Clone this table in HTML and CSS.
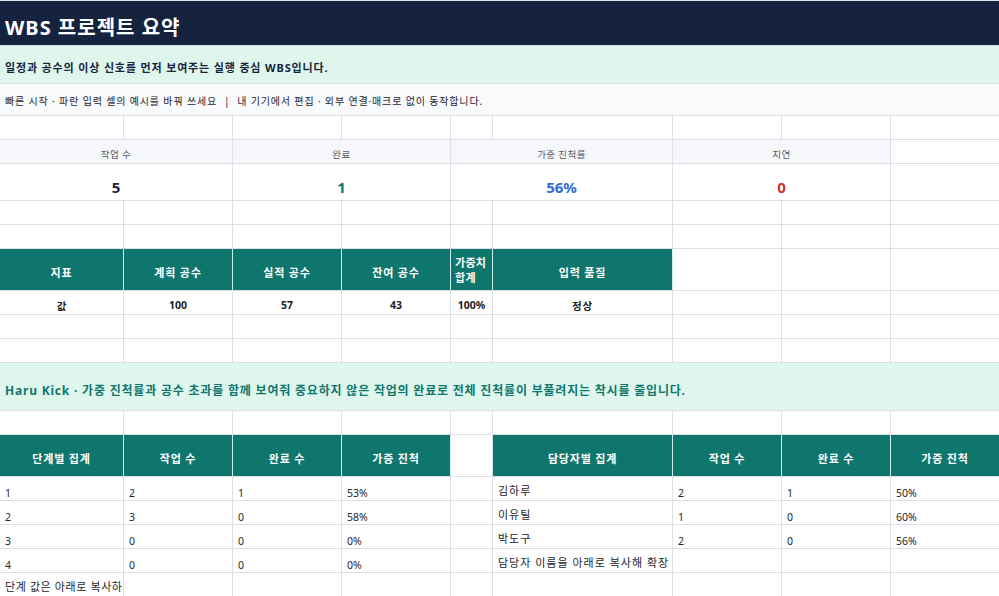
FILE: index.html
```html
<!DOCTYPE html>
<html lang="ko">
<head>
<meta charset="utf-8">
<title>WBS 프로젝트 요약</title>
<link rel="stylesheet" href="styles.css">
</head>
<body>
<div class="sheet">
  <div class="c full title">WBS 프로젝트 요약</div>
  <div class="c full intro">일정과 공수의 이상 신호를 먼저 보여주는 실행 중심 WBS입니다.</div>
  <div class="c full quick">빠른 시작 · 파란 입력 셀의 예시를 바꿔 쓰세요 &nbsp;| &nbsp;내 기기에서 편집 · 외부 연결·매크로 없이 동작합니다.</div>

  <!-- row 4 empty -->
  <div class="c"></div><div class="c"></div><div class="c"></div><div class="c"></div><div class="c"></div><div class="c"></div><div class="c"></div><div class="c"></div><div class="c"></div>

  <!-- KPI labels -->
  <div class="c kpi-label span2">작업 수</div>
  <div class="c kpi-label span2">완료</div>
  <div class="c kpi-label span2">가중 진척률</div>
  <div class="c kpi-label span2">지연</div>
  <div class="c"></div>

  <!-- KPI values -->
  <div class="c kpi-val span2 navy">5</div>
  <div class="c kpi-val span2 teal">1</div>
  <div class="c kpi-val span2 blue">56%</div>
  <div class="c kpi-val span2 red">0</div>
  <div class="c"></div>

  <!-- rows 7-8 empty -->
  <div class="c"></div><div class="c"></div><div class="c"></div><div class="c"></div><div class="c"></div><div class="c"></div><div class="c"></div><div class="c"></div><div class="c"></div>
  <div class="c"></div><div class="c"></div><div class="c"></div><div class="c"></div><div class="c"></div><div class="c"></div><div class="c"></div><div class="c"></div><div class="c"></div>

  <!-- metrics header -->
  <div class="c th">지표</div>
  <div class="c th">계획 공수</div>
  <div class="c th">실적 공수</div>
  <div class="c th">잔여 공수</div>
  <div class="c th wrap">가중치 합계</div>
  <div class="c th">입력 품질</div>
  <div class="c"></div><div class="c"></div><div class="c"></div>

  <!-- metrics values -->
  <div class="c td-b">값</div>
  <div class="c td-b">100</div>
  <div class="c td-b">57</div>
  <div class="c td-b">43</div>
  <div class="c td-b">100%</div>
  <div class="c td-b ko">정상</div>
  <div class="c"></div><div class="c"></div><div class="c"></div>

  <!-- rows 11-12 empty -->
  <div class="c"></div><div class="c"></div><div class="c"></div><div class="c"></div><div class="c"></div><div class="c"></div><div class="c"></div><div class="c"></div><div class="c"></div>
  <div class="c"></div><div class="c"></div><div class="c"></div><div class="c"></div><div class="c"></div><div class="c"></div><div class="c"></div><div class="c"></div><div class="c"></div>

  <div class="c full kick">Haru Kick · 가중 진척률과 공수 초과를 함께 보여줘 중요하지 않은 작업의 완료로 전체 진척률이 부풀려지는 착시를 줄입니다.</div>

  <!-- row 14 empty -->
  <div class="c"></div><div class="c"></div><div class="c"></div><div class="c"></div><div class="c"></div><div class="c"></div><div class="c"></div><div class="c"></div><div class="c"></div>

  <!-- summary headers -->
  <div class="c th sum-h">단계별 집계</div>
  <div class="c th sum-h">작업 수</div>
  <div class="c th sum-h">완료 수</div>
  <div class="c th sum-h">가중 진척</div>
  <div class="c gap"></div>
  <div class="c th sum-h">담당자별 집계</div>
  <div class="c th sum-h">작업 수</div>
  <div class="c th sum-h">완료 수</div>
  <div class="c th sum-h">가중 진척</div>

  <div class="c td">1</div><div class="c td">2</div><div class="c td">1</div><div class="c td">53%</div><div class="c"></div>
  <div class="c td name">김하루</div><div class="c td">2</div><div class="c td">1</div><div class="c td">50%</div>

  <div class="c td">2</div><div class="c td">3</div><div class="c td">0</div><div class="c td">58%</div><div class="c"></div>
  <div class="c td name">이유틸</div><div class="c td">1</div><div class="c td">0</div><div class="c td">60%</div>

  <div class="c td">3</div><div class="c td">0</div><div class="c td">0</div><div class="c td">0%</div><div class="c"></div>
  <div class="c td name">박도구</div><div class="c td">2</div><div class="c td">0</div><div class="c td">56%</div>

  <div class="c td">4</div><div class="c td">0</div><div class="c td">0</div><div class="c td">0%</div><div class="c"></div>
  <div class="c td name">담당자 이름을 아래로 복사해 확장</div><div class="c"></div><div class="c"></div><div class="c"></div>

  <div class="c td name tight">단계 값은 아래로 복사하</div><div class="c"></div><div class="c"></div><div class="c"></div><div class="c"></div>
  <div class="c"></div><div class="c"></div><div class="c"></div><div class="c"></div>
</div>
</body>
</html>
```

FILE: styles.css
```css
* { box-sizing: border-box; }

html, body {
  margin: 0;
  padding: 0;
  background: #ffffff;
}

body {
  font-family: "Noto Sans", "Noto Sans CJK KR", sans-serif;
  color: #1f2430;
  overflow: hidden;
}

.sheet {
  display: grid;
  width: 999px;
  grid-template-columns: 124px 109px 109px 109px 42px 180px 109px 109px 109px;
  grid-template-rows: 46px 38px 32px 24px 24px 37px 24px 24px 42px 24px 24px 24px 48px 24px 42px 24px 24px 24px 24px 24px;
}

.c {
  border-right: 1px solid #dcdfe5;
  border-bottom: 1px solid #dcdfe5;
  display: flex;
  align-items: center;
  overflow: hidden;
  white-space: nowrap;
  min-width: 0;
}

.full {
  grid-column: 1 / -1;
  border-right: none;
  padding-left: 5px;
}

.span2 { grid-column: span 2; }

.title {
  background: #15233f;
  color: #ffffff;
  font-size: 20px;
  font-weight: 700;
  letter-spacing: 1px;
  border-top: 1px solid #dfe5ef;
  border-bottom: 1px solid #cfe3e6;
  padding-top: 7px;
}

.intro {
  background: #dff6ec;
  color: #16233f;
  font-size: 11px;
  font-weight: 700;
  letter-spacing: 0.85px;
  padding-top: 4px;
}

.quick {
  background: #f8fafc;
  color: #1f2430;
  font-size: 10px;
  letter-spacing: 0.85px;
  padding-top: 2px;
}

.kpi-label {
  background: #f5f7fa;
  color: #555c66;
  font-size: 9.5px;
  letter-spacing: 0.4px;
  justify-content: center;
  padding-top: 4px;
}

.kpi-val {
  justify-content: center;
  font-size: 15px;
  font-weight: 700;
  padding-top: 10px;
}

.navy { color: #1b2540; }
.teal { color: #0f766e; }
.blue { color: #2f6bd3; }
.red { color: #c0372f; }

.th {
  background: #0f766e;
  color: #ffffff;
  font-size: 11px;
  font-weight: 700;
  letter-spacing: 0.8px;
  justify-content: center;
  border-right-color: #cfeeea;
  border-bottom-color: #dcdfe5;
  padding-top: 4px;
}

.th.wrap {
  white-space: normal;
  justify-content: flex-start;
  padding-left: 4px;
  letter-spacing: 0.3px;
  line-height: 1.35;
  padding-top: 2px;
}

.td-b {
  justify-content: center;
  font-size: 10.5px;
  font-weight: 700;
  color: #1a1d24;
  padding-top: 5px;
}

.td-b.ko { letter-spacing: 0.8px; }

.sum-h { padding-top: 5px; }

.gap { background: #ffffff; }

.td {
  padding-left: 5px;
  font-size: 10.5px;
  color: #23262d;
  padding-top: 8px;
}

.td.name {
  font-size: 11px;
  letter-spacing: 1px;
  padding-top: 3px;
}

.td.name.tight { letter-spacing: 0.6px; }

.kick {
  background: #dff6ec;
  color: #0f766e;
  font-size: 12px;
  font-weight: 700;
  letter-spacing: 0.8px;
  padding-top: 6px;
}
```
